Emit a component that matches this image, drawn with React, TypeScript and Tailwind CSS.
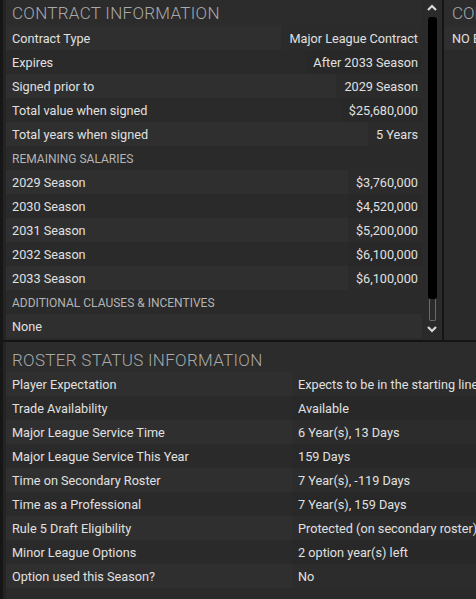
import React from "react";

const contractRows: [string, string][] = [
  ["Contract Type", "Major League Contract"],
  ["Expires", "After 2033 Season"],
  ["Signed prior to", "2029 Season"],
  ["Total value when signed", "$25,680,000"],
  ["Total years when signed", "5 Years"],
];
const salaryRows: [string, string][] = [
  ["2029 Season", "$3,760,000"],
  ["2030 Season", "$4,520,000"],
  ["2031 Season", "$5,200,000"],
  ["2032 Season", "$6,100,000"],
  ["2033 Season", "$6,100,000"],
];
const rosterRows: [string, string][] = [
  ["Player Expectation", "Expects to be in the starting lineup"],
  ["Trade Availability", "Available"],
  ["Major League Service Time", "6 Year(s), 13 Days"],
  ["Major League Service This Year", "159 Days"],
  ["Time on Secondary Roster", "7 Year(s), -119 Days"],
  ["Time as a Professional", "7 Year(s), 159 Days"],
  ["Rule 5 Draft Eligibility", "Protected (on secondary roster)"],
  ["Minor League Options", "2 option year(s) left"],
  ["Option used this Season?", "No"],
];

function Row({ label, value, i }: { label: string; value: string; i: number }) {
  return (
    <div className={`flex h-6 items-center ${i % 2 === 0 ? "bg-[#2f2f2f]" : "bg-[#2a2a2a]"}`}>
      <div className="flex-1 pl-[6px] pt-[2px] text-[#e0e0e0]">{label}</div>
      <div className={`h-full flex items-center pr-[4px] pl-2 pt-[2px] text-[#e0e0e0] ${i % 2 === 0 ? "bg-[#2b2b2b]" : "bg-[#282828]"}`}>{value}</div>
    </div>
  );
}

function Sub({ text, i }: { text: string; i: number }) {
  return (
    <div className={`flex h-6 items-center pl-[6px] pt-[2px] text-[12px] text-[#b4b4b4] ${i % 2 === 0 ? "bg-[#2f2f2f]" : "bg-[#2a2a2a]"}`}>
      {text}
    </div>
  );
}

export default function App() {
  return (
    <div
      className="w-[476px] h-[599px] overflow-hidden bg-[#2a2a2a] text-[12.7px] leading-none"
      style={{ fontFamily: "Roboto, 'Liberation Sans', sans-serif" }}
    >
      <div className="flex h-[340px]">
        <div className="w-[6px] bg-[#242424] border-l-[3px] border-[#161616]" />
        <div className="w-[416px] flex flex-col">
          <div className="h-[26px] flex items-center pl-[6px] text-[17px] font-light tracking-[0.3px] text-[#a9a9a9] bg-[#2c2c2c]">
            CONTRACT INFORMATION
          </div>
          {contractRows.map(([l, v], i) => (
            <Row key={l} label={l} value={v} i={i} />
          ))}
          <Sub text="REMAINING SALARIES" i={1} />
          {salaryRows.map(([l, v], i) => (
            <Row key={l} label={l} value={v} i={i} />
          ))}
          <Sub text="ADDITIONAL CLAUSES & INCENTIVES" i={1} />
          <div className="flex h-6 items-center pl-[6px] pt-[2px] text-[#e0e0e0] bg-[#2f2f2f]">None</div>
          <div className="flex-1 bg-[#2a2a2a]" />
        </div>
        <div className="w-[20px] flex flex-col items-center bg-[#2a2a2a]">
          <svg width="10" height="8" viewBox="0 0 10 8" className="mt-[4px]">
            <path d="M1 6 L5 2 L9 6" stroke="#d8d8d8" strokeWidth="2.2" fill="none" />
          </svg>
          <div className="mt-[5px] w-[9px] h-[282px] bg-black rounded-[3px]" />
          <div className="w-[7px] h-[22px] border-x border-b border-[#6a6a6a] rounded-b-[2px]" />
          <svg width="10" height="8" viewBox="0 0 10 8" className="mt-[4px]">
            <path d="M1 2 L5 6 L9 2" stroke="#d8d8d8" strokeWidth="2.2" fill="none" />
          </svg>
        </div>
        <div className="w-[2px] bg-[#151515]" />
        <div className="flex-1 flex flex-col overflow-hidden whitespace-nowrap">
          <div className="h-[26px] flex items-center pl-[8px] text-[17px] font-light text-[#a9a9a9] bg-[#2c2c2c]">
            CONTRACT
          </div>
          <div className="h-6 flex items-center pl-[8px] pt-[2px] text-[#e0e0e0] bg-[#2f2f2f]">NO BONUS</div>
          <div className="flex-1 bg-[#2a2a2a]" />
        </div>
      </div>
      <div className="h-[2px] bg-[#141414]" />
      <div className="flex h-[257px]">
        <div className="w-[6px] bg-[#242424] border-l-[3px] border-[#161616]" />
        <div className="flex-1 min-w-0 flex flex-col whitespace-nowrap overflow-hidden">
          <div className="h-[30px] flex items-center pl-[6px] pt-[6px] text-[17px] font-light tracking-[0.3px] text-[#a9a9a9] bg-[#2c2c2c]">
            ROSTER STATUS INFORMATION
          </div>
          {rosterRows.map(([l, v], i) => (
            <div key={l} className={`flex h-6 items-center ${i % 2 === 0 ? "bg-[#2f2f2f]" : "bg-[#2a2a2a]"}`}>
              <div className="w-[286px] shrink-0 h-full flex items-center pl-[6px] pt-[2px] text-[#e0e0e0]">{l}</div>
              <div className={`flex-1 min-w-0 overflow-hidden h-full flex items-center pl-[6px] pt-[2px] text-[#e0e0e0] ${i % 2 === 0 ? "bg-[#2c2c2c]" : "bg-[#282828]"}`}>{v}</div>
            </div>
          ))}
          <div className="flex-1 bg-[#2a2a2a]" />
        </div>
      </div>
    </div>
  );
}
